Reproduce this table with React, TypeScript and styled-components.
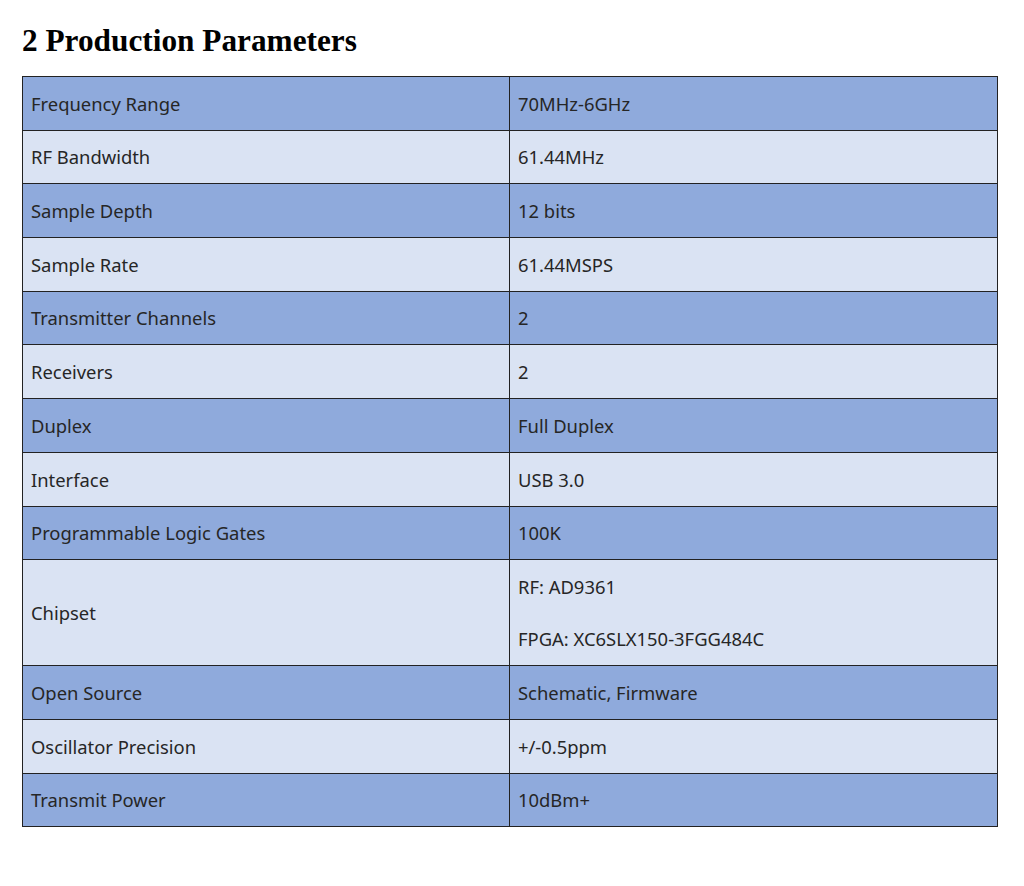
import React from "react";
import styled, { createGlobalStyle } from "styled-components";

const Global = createGlobalStyle`
  html, body { margin: 0; padding: 0; background: #fff; }
  body { font-family: "Noto Sans", "Open Sans", sans-serif; }
`;

const Page = styled.div`
  padding: 22px 26px 0 22px;
`;

const Heading = styled.h2`
  margin: 0 0 17px 0;
  font-family: "Liberation Serif", "Times New Roman", serif;
  font-weight: bold;
  font-size: 31.3px;
  line-height: 37px;
  color: #000;
`;

const Table = styled.table`
  width: 976px;
  border-collapse: collapse;
  border: 1px solid #222;
  table-layout: fixed;
`;

const Col = styled.col<{ $w?: number }>`
  width: ${(p) => (p.$w ? `${p.$w}px` : "auto")};
`;

const Row = styled.tr<{ $dark: boolean }>`
  background: ${(p) => (p.$dark ? "#8faadc" : "#dae3f3")};
`;

const Cell = styled.td`
  border: 1px solid #222;
  padding: 14.7px 8px 14px;
  font-size: 18.4px;
  line-height: 24px;
  color: #262626;
  vertical-align: middle;
`;

const Para = styled.p`
  margin: 0;
  & + & { margin-top: 28.5px; }
`;

const rows: [string, string[]][] = [
  ["Frequency Range", ["70MHz-6GHz"]],
  ["RF Bandwidth", ["61.44MHz"]],
  ["Sample Depth", ["12 bits"]],
  ["Sample Rate", ["61.44MSPS"]],
  ["Transmitter Channels", ["2"]],
  ["Receivers", ["2"]],
  ["Duplex", ["Full Duplex"]],
  ["Interface", ["USB 3.0"]],
  ["Programmable Logic Gates", ["100K"]],
  ["Chipset", ["RF: AD9361", "FPGA: XC6SLX150-3FGG484C"]],
  ["Open Source", ["Schematic, Firmware"]],
  ["Oscillator Precision", ["+/-0.5ppm"]],
  ["Transmit Power", ["10dBm+"]],
];

export default function App() {
  return (
    <Page>
      <Global />
      <Heading>2 Production Parameters</Heading>
      <Table>
        <colgroup>
          <Col $w={487} />
          <Col />
        </colgroup>
        <tbody>
          {rows.map(([k, v], i) => (
            <Row key={k} $dark={i % 2 === 0}>
              <Cell>{k}</Cell>
              <Cell>
                {v.map((t) => (
                  <Para key={t}>{t}</Para>
                ))}
              </Cell>
            </Row>
          ))}
        </tbody>
      </Table>
    </Page>
  );
}
